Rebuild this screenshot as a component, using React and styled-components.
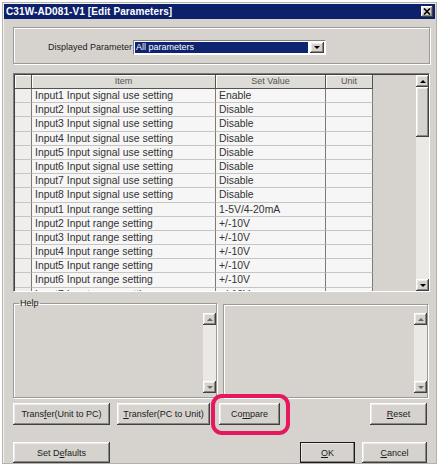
import styled, { createGlobalStyle } from 'styled-components';

const GlobalStyle = createGlobalStyle`
  html, body {
    margin: 0;
    padding: 0;
    background: #ffffff;
  }
  body {
    font-family: "Liberation Sans", Arial, sans-serif;
  }
`;

const rows = [
  ['Input1 Input signal use setting', 'Enable'],
  ['Input2 Input signal use setting', 'Disable'],
  ['Input3 Input signal use setting', 'Disable'],
  ['Input4 Input signal use setting', 'Disable'],
  ['Input5 Input signal use setting', 'Disable'],
  ['Input6 Input signal use setting', 'Disable'],
  ['Input7 Input signal use setting', 'Disable'],
  ['Input8 Input signal use setting', 'Disable'],
  ['Input1 Input range setting', '1-5V/4-20mA'],
  ['Input2 Input range setting', '+/-10V'],
  ['Input3 Input range setting', '+/-10V'],
  ['Input4 Input range setting', '+/-10V'],
  ['Input5 Input range setting', '+/-10V'],
  ['Input6 Input range setting', '+/-10V'],
  ['Input7 Input range setting', '+/-10V'],
];

const App = () => {
  return (
    <>
      <GlobalStyle />
      <Window>
        <TitleBar>
          <Title>C31W-AD081-V1 [Edit Parameters]</Title>
          <CloseBox>
            <svg width="8" height="7" viewBox="0 0 8 7">
              <path d="M1 0.5 L7 6.5 M7 0.5 L1 6.5" stroke="#000" strokeWidth="1.6" />
            </svg>
          </CloseBox>
        </TitleBar>

        <Content>
          <FilterGroup>
            <FieldLabel>Displayed Parameter</FieldLabel>
            <Combo>
              <ComboValue>All parameters</ComboValue>
              <ArrowButton $w={14}>
                <Tri $dir="down" />
              </ArrowButton>
            </Combo>
          </FilterGroup>

          <GridFrame>
            <Grid>
              <Row>
                <HeadCell />
                <HeadCell>Item</HeadCell>
                <HeadCell>Set Value</HeadCell>
                <HeadCell>Unit</HeadCell>
              </Row>
              {rows.map(([item, value], i) => (
                <Row key={i}>
                  <RowHead />
                  <Cell>{item}</Cell>
                  <Cell>{value}</Cell>
                  <Cell />
                </Row>
              ))}
            </Grid>
            <ScrollBar>
              <ArrowButton $h={12}>
                <Tri $dir="up" />
              </ArrowButton>
              <Thumb />
              <Track />
              <ArrowButton $h={12}>
                <Tri $dir="down" />
              </ArrowButton>
            </ScrollBar>
          </GridFrame>

          <HelpRow>
            <HelpSet>
              <Legend>Help</Legend>
              <HelpInner>
                <HelpScroll />
              </HelpInner>
            </HelpSet>
            <HelpPane>
              <HelpScroll />
            </HelpPane>
          </HelpRow>

          <ButtonRow $top={5} $h={22}>
            <Button $w={97}>Trans<u>f</u>er(Unit to PC)</Button>
            <Button $w={93}><u>T</u>ransfer(PC to Unit)</Button>
            <Highlight>
              <Button $w={61}>Co<u>m</u>pare</Button>
            </Highlight>
            <Button $w={57} $push><u>R</u>eset</Button>
          </ButtonRow>

          <ButtonRow $top={17} $h={21}>
            <Button $w={97}>Set D<u>e</u>faults</Button>
            <Button $w={55} $push $primary><u>O</u>K</Button>
            <Button $w={65}><u>C</u>ancel</Button>
          </ButtonRow>
        </Content>
      </Window>
    </>
  );
};

const HelpScroll = () => (
  <SmallScroll>
    <ArrowButton $h={12}>
      <Tri $dir="up" $muted />
    </ArrowButton>
    <Track />
    <ArrowButton $h={12}>
      <Tri $dir="down" $muted />
    </ArrowButton>
  </SmallScroll>
);

export default App;

const raised = `
  background: #d6d3ce;
  box-shadow: inset -1px -1px 0 #404040, inset 1px 1px 0 #ffffff,
    inset -2px -2px 0 #8a8884, inset 2px 2px 0 #ecebe8;
`;

const etched = `
  border: 1px solid #9c9a95;
  box-shadow: inset 1px 1px 0 #ffffff, 1px 1px 0 #ffffff;
`;

const Window = styled.div`
  margin: 2px 0 0 2px;
  width: 435px;
  height: 462px;
  box-sizing: border-box;
  display: flex;
  flex-direction: column;
  background: #d6d3ce;
  border: 1px solid #b4b2ad;
  box-shadow: inset 1px 1px 0 #f4f3f1;
`;

const TitleBar = styled.div`
  margin: 1px 1px 0;
  height: 15px;
  display: flex;
  align-items: center;
  justify-content: space-between;
  padding: 0 2px;
  background: #0c206c;
`;

const Title = styled.span`
  color: #ffffff;
  font-weight: bold;
  font-size: 10px;
  letter-spacing: 0.1px;
`;

const CloseBox = styled.div`
  width: 12px;
  height: 11px;
  display: flex;
  align-items: center;
  justify-content: center;
  ${raised}
`;

const Content = styled.div`
  display: flex;
  flex-direction: column;
  padding: 8px 6px 0 10px;
`;

const FilterGroup = styled.div`
  height: 37px;
  box-sizing: border-box;
  display: flex;
  align-items: center;
  padding: 3px 0 0 34px;
  ${etched}
`;

const FieldLabel = styled.span`
  font-size: 9px;
  color: #222;
  margin-right: 1px;
`;

const Combo = styled.div`
  width: 193px;
  height: 15px;
  box-sizing: border-box;
  display: flex;
  padding: 1px;
  background: #ffffff;
  border: 1px solid;
  border-color: #808080 #ffffff #ffffff #808080;
`;

const ComboValue = styled.div`
  flex: 1;
  background: #0e2470;
  color: #ffffff;
  font-size: 9px;
  line-height: 11px;
  padding-left: 1px;
  margin-right: 2px;
`;

const ArrowButton = styled.div`
  width: ${(p) => (p.$w ? `${p.$w}px` : '100%')};
  height: ${(p) => (p.$h ? `${p.$h}px` : '100%')};
  flex-shrink: 0;
  box-sizing: border-box;
  display: flex;
  align-items: center;
  justify-content: center;
  ${raised}
`;

const Tri = styled.span`
  width: 0;
  height: 0;
  border-left: 3px solid transparent;
  border-right: 3px solid transparent;
  ${(p) =>
    p.$dir === 'up'
      ? `border-bottom: 3px solid ${p.$muted ? '#6c6a66' : '#000'};`
      : `border-top: 3px solid ${p.$muted ? '#6c6a66' : '#000'};`}
`;

const GridFrame = styled.div`
  margin-top: 9px;
  height: 219px;
  box-sizing: border-box;
  display: flex;
  justify-content: space-between;
  overflow: hidden;
  background: #d6d3ce;
  border: 1px solid;
  border-color: #7e7c78 #ffffff #ffffff #7e7c78;
  box-shadow: inset 1px 1px 0 #404040;
`;

const Grid = styled.div`
  display: flex;
  flex-direction: column;
  padding: 1px 0 0 1px;
`;

const Row = styled.div`
  display: grid;
  grid-template-columns: 17px 184px 110px 47px;
  height: 14.2px;
  flex-shrink: 0;

  &:first-child {
    height: 14px;
  }
`;

const HeadCell = styled.div`
  box-sizing: border-box;
  background: #dedcd7;
  border-right: 1px solid #555350;
  border-bottom: 1px solid #555350;
  box-shadow: inset 1px 1px 0 #ffffff;
  color: #555;
  font-size: 9px;
  line-height: 13px;
  text-align: center;
`;

const Cell = styled.div`
  box-sizing: border-box;
  background: #f6f6f6;
  border-right: 1px solid #7c7a76;
  border-bottom: 1px solid #c6c5c2;
  color: #333;
  font-size: 10.4px;
  line-height: 13px;
  padding-left: 3px;
  white-space: nowrap;
  overflow: hidden;
`;

const RowHead = styled(Cell)`
  background: #efeeec;
`;

const ScrollBar = styled.div`
  width: 13px;
  display: flex;
  flex-direction: column;
  margin: 1px 0 0 0;
`;

const Thumb = styled.div`
  height: 50px;
  flex-shrink: 0;
  ${raised}
`;

const Track = styled.div`
  flex: 1;
  background: #ebe9e5;
`;

const HelpRow = styled.div`
  display: flex;
  align-items: flex-end;
  gap: 6px;
  margin-top: 6px;
  padding-right: 2px;
`;

const HelpSet = styled.fieldset`
  width: 204px;
  box-sizing: border-box;
  margin: 0;
  padding: 0 0 4px 0;
  min-width: 0;
  ${etched}
`;

const Legend = styled.legend`
  font-size: 9px;
  color: #222;
  line-height: 11px;
  padding: 0 1px;
  margin-left: 5px;
`;

const HelpInner = styled.div`
  display: flex;
  justify-content: flex-end;
  padding-top: 4px;
`;

const HelpPane = styled.div`
  flex: 1;
  height: 94px;
  box-sizing: border-box;
  display: flex;
  justify-content: flex-end;
  padding: 8px 0 4px;
  ${etched}
`;

const SmallScroll = styled.div`
  width: 13px;
  height: 80px;
  display: flex;
  flex-direction: column;
`;

const ButtonRow = styled.div`
  display: flex;
  gap: 7px;
  margin-top: ${(p) => p.$top}px;
  height: ${(p) => p.$h}px;
  padding-right: 3px;
`;

const Button = styled.div`
  width: ${(p) => p.$w}px;
  height: 100%;
  box-sizing: border-box;
  display: flex;
  align-items: center;
  justify-content: center;
  margin-left: ${(p) => (p.$push ? 'auto' : '0')};
  font-size: 9px;
  color: #1a1a1a;
  white-space: nowrap;
  ${raised}
  ${(p) => (p.$primary ? 'outline: 1px solid #1a1a1a; outline-offset: -1px;' : '')}
`;

const Highlight = styled.div`
  position: relative;
  display: flex;
  margin-left: 2px;

  &::after {
    content: '';
    position: absolute;
    top: -9px;
    left: -8px;
    right: -10px;
    bottom: -10px;
    border: 4px solid #e4175f;
    border-radius: 11px;
    pointer-events: none;
  }
`;
